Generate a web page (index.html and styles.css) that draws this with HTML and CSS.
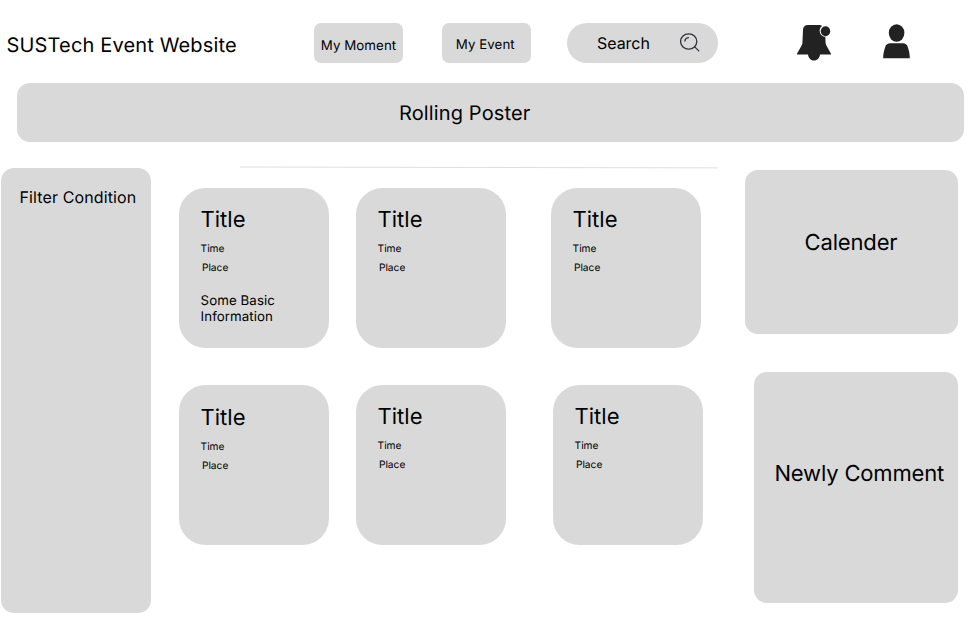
FILE: index.html
```html
<!DOCTYPE html>
<html lang="en">
<head>
<meta charset="utf-8">
<title>SUSTech Event Website</title>
<link rel="stylesheet" href="styles.css">
</head>
<body>
<header class="header">
  <div class="brand">SUSTech Event Website</div>
  <nav class="nav">
    <a class="nav-btn nav-moment">My Moment</a>
    <a class="nav-btn nav-event">My Event</a>
  </nav>
  <div class="search">
    <span>Search</span>
    <svg class="search-icon" viewBox="0 0 20 20" width="20" height="20" fill="none" stroke="#33333b" stroke-width="1.3" stroke-linecap="round">
      <ellipse cx="8.7" cy="8.5" rx="8.1" ry="7.7"/>
      <path d="M14.7 13.9L18.8 17.9M4.900 8C5.100 6.100 6.400 4.900 8.400 4.700"/>
    </svg>
  </div>
  <svg class="bell" viewBox="0 0 36 38" width="36" height="38" fill="#222">
    <path d="M11 1h11.500c1 0 1.900.3 2.600.9a6 6 0 0 0 3.200 10.800l.3 6.300c.1 1 .3 1.700.8 2.500l4.600 8.200v.9H23c-.3 3.300-2.600 6-6 6s-5.700-2.700-6-6H0v-.9l4.600-8.200c.5-.8.700-1.500.8-2.500L6 5.800C6.200 2.600 8 1 11 1Z"/>
    <ellipse cx="28.500" cy="7.300" rx="4.700" ry="5"/>
  </svg>
  <svg class="user" viewBox="0 0 28 36" width="28" height="36" fill="#222">
    <ellipse cx="13.600" cy="9" rx="7.800" ry="8.700"/>
    <path d="M7.500 19.300h12.300c2.700 0 4.200 1.200 5 3.600 1.200 3.500 2 7 2 11.300H.2c0-4.300.8-7.800 2-11.300.8-2.400 2.500-3.600 5.300-3.600Z"/>
  </svg>
</header>
<section class="poster">Rolling Poster</section>
<main class="main">
  <aside class="filter">Filter Condition</aside>
  <section class="events">
    <svg class="divider" viewBox="0 0 478 3" width="478" height="3"><path d="M0 1L478 1.900" stroke="#dedede" stroke-width="1"/></svg>
    <div class="row row-first">
      <article class="card"><h2>Title</h2><p class="time">Time</p><p class="place">Place</p><p class="info">Some Basic Information</p></article>
      <article class="card"><h2>Title</h2><p class="time">Time</p><p class="place">Place</p></article>
      <article class="card"><h2>Title</h2><p class="time">Time</p><p class="place">Place</p></article>
    </div>
    <div class="row row-second">
      <article class="card"><h2>Title</h2><p class="time">Time</p><p class="place">Place</p></article>
      <article class="card"><h2>Title</h2><p class="time">Time</p><p class="place">Place</p></article>
      <article class="card"><h2>Title</h2><p class="time">Time</p><p class="place">Place</p></article>
    </div>
  </section>
  <aside class="side">
    <section class="panel calendar">Calender</section>
    <section class="panel comments">Newly Comment</section>
  </aside>
</main>
</body>
</html>
```
FILE: styles.css
```css
* { box-sizing: border-box; }
body {
  margin: 0;
  width: 967px;
  height: 622px;
  overflow: hidden;
  background: #fff;
  color: #000;
  font-family: Inter, sans-serif;
  text-rendering: geometricPrecision;
}
h2, p { margin: 0; font-weight: 400; }
svg { display: block; flex: none; }

.header { display: flex; align-items: flex-start; height: 83px; }
.brand {
  width: 313.500px;
  padding: 32px 0 0 6.600px;
  font-size: 20px;
  line-height: 26px;
  letter-spacing: .15px;
  white-space: nowrap;
}
.nav { display: flex; gap: 39px; padding-top: 23.300px; }
.nav-btn {
  width: 89px;
  height: 40px;
  border-radius: 7px;
  background: #d9d9d9;
  font-size: 13.300px;
  line-height: 16px;
  letter-spacing: .06px;
  white-space: nowrap;
}
.nav-moment { padding: 14.700px 0 0 7.300px; }
.nav-event { padding: 13.400px 0 0 14.300px; }
.search {
  display: flex;
  justify-content: space-between;
  width: 151px;
  height: 40px;
  margin: 23px 0 0 36.200px;
  padding: 10px 18px 0 30.200px;
  border-radius: 20px;
  background: #d9d9d9;
  font-size: 16px;
  line-height: 20px;
}
.bell { margin: 24px 0 0 79.200px; }
.user { margin: 24px 0 0 50px; }

.poster {
  width: 947px;
  height: 58.500px;
  margin-left: 17.300px;
  padding-left: 381.700px;
  border-radius: 13px;
  background: #d9d9d9;
  font-size: 20px;
  line-height: 60px;
  letter-spacing: .13px;
}

.main { display: flex; align-items: flex-start; }
.filter {
  width: 150.800px;
  height: 445px;
  margin: 26.500px 0 0 .6px;
  padding: 19.400px 0 0 18.800px;
  border-radius: 13px;
  background: #d9d9d9;
  font-size: 16px;
  line-height: 20px;
  letter-spacing: .13px;
}
.events { width: 593.200px; padding: 24.500px 0 0 27.200px; }
.divider { margin-left: 61.400px; }
.row { display: flex; align-items: flex-start; }
.row-first { margin-top: 18.700px; }
.row-second { margin-top: 37.300px; }
.card {
  flex: none;
  width: 150px;
  height: 160px;
  padding: 19.200px 22px 0;
  border-radius: 26.500px;
  background: #d9d9d9;
}
.card:nth-child(2) { margin-left: 27px; }
.card:nth-child(3) { margin-left: 45px; }
.row-second .card { padding-top: 18.600px; }
.row-second .card:first-child { margin-top: .3px; padding-top: 19.700px; }
.row-second .card:nth-child(3) { margin-left: 47px; }
.card h2 { font-size: 22px; line-height: 27px; }
.time, .place { font-size: 10.200px; line-height: 13px; }
.time { margin-top: 9px; }
.place { margin: 6px 0 0 1.300px; }
.info { margin-top: 18px; font-size: 13.300px; line-height: 16px; letter-spacing: .07px; }

.side { padding: 28.700px 0 0; }
.panel { border-radius: 13px; background: #d9d9d9; font-size: 22px; line-height: 27px; letter-spacing: -.16px; white-space: nowrap; }
.calendar { width: 213px; height: 164px; padding: 59.700px 0 0 60px; }
.comments { width: 203.700px; height: 231px; margin: 37.700px 0 0 9.300px; padding: 88.700px 0 0 20.500px; }
```
